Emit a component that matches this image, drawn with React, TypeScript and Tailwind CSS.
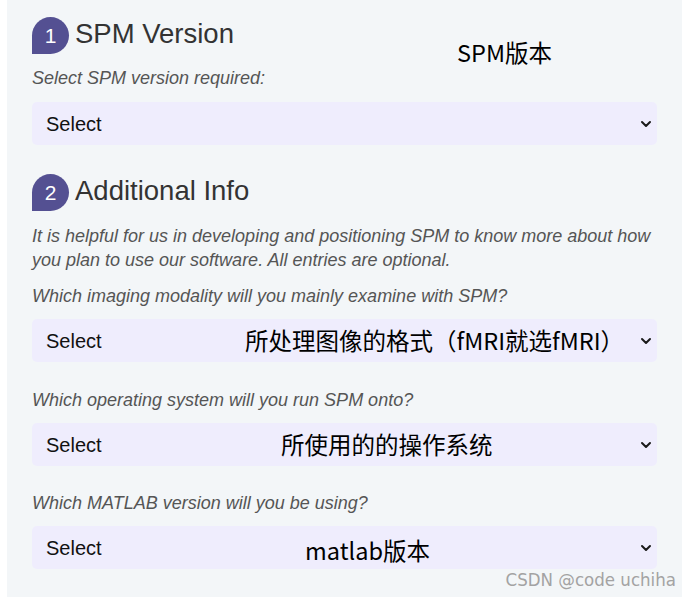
import React from "react";

const cjk = { fontFamily: '"Noto Sans CJK SC", "Noto Sans", sans-serif' };

const Badge = ({ n }: { n: number }) => (
  <div className="w-[37px] h-[37px] rounded-[19px_19px_19px_0] bg-[#545092] text-white flex items-center justify-center text-[21px] leading-none">
    {n}
  </div>
);

const Chevron = () => (
  <svg
    className="absolute right-[5px] top-1/2 -translate-y-1/2 pointer-events-none"
    width="12"
    height="8"
    viewBox="0 0 12 8"
    fill="none"
  >
    <path d="M2 2l4 4 4-4" stroke="#1a1a1a" strokeWidth="2" strokeLinecap="round" strokeLinejoin="round" />
  </svg>
);

const SelectBox = ({ note, noteLeft, noteNudge }: { note?: string; noteLeft?: string; noteNudge?: string }) => (
  <div className="relative w-[625px] h-[43px]">
    <select className="appearance-none w-full h-full rounded-[5px] bg-[#efedfd] pl-[14px] pr-8 text-[20px] text-[#111] outline-none">
      <option>Select</option>
    </select>
    <Chevron />
    {note && (
      <span
        className={`absolute top-1/2 -translate-y-1/2 text-[23.5px] text-black whitespace-nowrap pointer-events-none ${noteLeft} ${noteNudge ?? ""}`}
        style={cjk}
      >
        {note}
      </span>
    )}
  </div>
);

const Label = ({ children, className = "" }: { children: React.ReactNode; className?: string }) => (
  <p className={`text-[18px] leading-[24px] italic text-[#555] ${className}`}>{children}</p>
);

export default function App() {
  return (
    <div className="min-h-[597px] bg-white" style={{ fontFamily: '"Liberation Sans", Arial, sans-serif' }}>
      <div className="relative ml-[7px] w-[675px] min-h-[597px] bg-[#f3f6f8] pl-[25px] pt-[17px]">
        <div className="flex items-center gap-[6px]">
          <Badge n={1} />
          <h2 className="text-[27.5px] leading-none text-[#333] -mt-[3px]">SPM Version</h2>
        </div>
        <span className="absolute left-[450px] top-[35px] text-[23.5px] text-black" style={cjk}>
          SPM版本
        </span>
        <Label className="mt-[12px]">Select SPM version required:</Label>
        <div className="mt-[12px]">
          <SelectBox />
        </div>

        <div className="flex items-center gap-[6px] mt-[29px]">
          <Badge n={2} />
          <h2 className="text-[27.5px] leading-none text-[#333] -mt-[3px]">Additional Info</h2>
        </div>
        <Label className="mt-[13px] w-[630px]">
          It is helpful for us in developing and positioning SPM to know more about how you plan to use our software. All entries are optional.
        </Label>
        <Label className="mt-[12px]">Which imaging modality will you mainly examine with SPM?</Label>
        <div className="mt-[11px]">
          <SelectBox note="所处理图像的格式（fMRI就选fMRI）" noteLeft="left-[213px]" />
        </div>
        <Label className="mt-[26px]">Which operating system will you run SPM onto?</Label>
        <div className="mt-[11px]">
          <SelectBox note="所使用的的操作系统" noteLeft="left-[249px]" />
        </div>
        <Label className="mt-[25px]">Which MATLAB version will you be using?</Label>
        <div className="mt-[11px]">
          <SelectBox note="matlab版本" noteLeft="left-[273px]" noteNudge="mt-[3px]" />
        </div>

        <span
          className="absolute right-[6px] top-[566px] text-[18.5px] text-[#a3a3a3]"
          style={{ fontFamily: '"Liberation Sans Narrow", "DejaVu Sans Condensed", sans-serif', fontStretch: "condensed" }}
        >
          CSDN @code uchiha
        </span>
      </div>
    </div>
  );
}
